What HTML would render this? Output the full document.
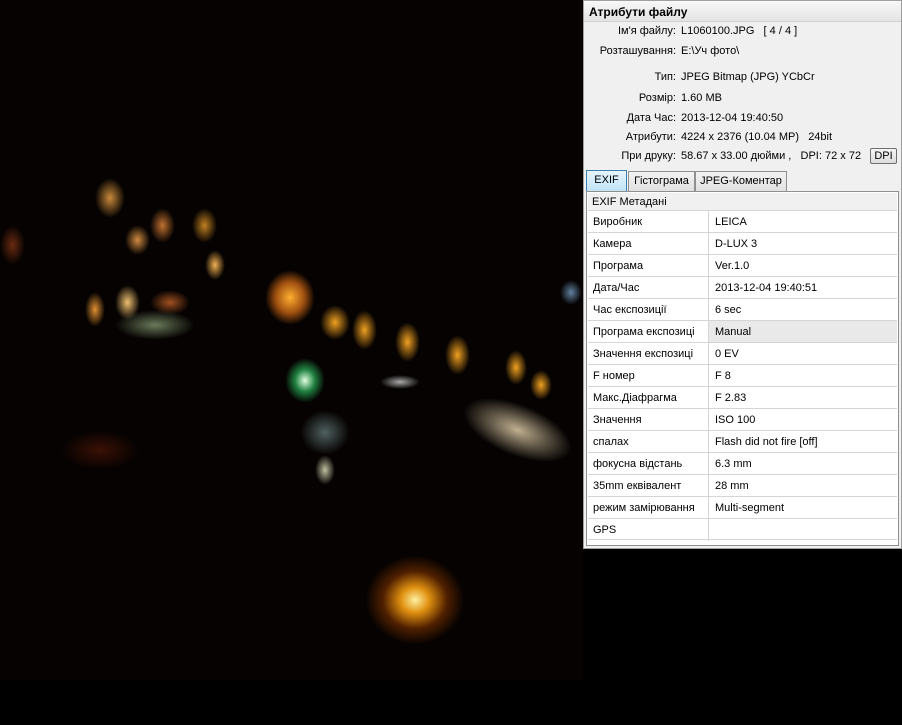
<!DOCTYPE html>
<html><head><meta charset="utf-8"><style>
*{margin:0;padding:0;box-sizing:border-box}
body{width:902px;height:725px;background:#000;position:relative;overflow:hidden;font-family:"Liberation Sans",sans-serif;font-size:11px;color:#000}
.photo{position:absolute;left:0;top:0;width:583px;height:680px;background:#050201}
.l{position:absolute;border-radius:50%}
.panel{position:absolute;left:583px;top:0;width:319px;height:549px;background:#f0f0f0;border:1px solid #a0a0a0}
.title{position:absolute;left:0;top:0;width:317px;height:21px;background:linear-gradient(#f8f8f8,#e4e4e4);font-weight:bold;font-size:12px;padding:4px 5px;border-bottom:1px solid #d0d0d0}
.kv{position:absolute;left:0;width:312px;font-size:11px}
.kv .k{position:absolute;right:220px;text-align:right;white-space:nowrap}
.kv .v{position:absolute;left:97px;white-space:nowrap}
.dpi{position:absolute;left:286px;top:147px;width:27px;height:16px;border:1px solid #707070;border-radius:2px;background:linear-gradient(#f6f6f6,#dcdcdc);font-size:11px;text-align:center;line-height:14px}
.tab{position:absolute;top:170px;height:21px;border:1px solid #8e8f8f;border-bottom:none;background:linear-gradient(#f2f2f2,#e0e0e0);font-size:11px;text-align:center;line-height:19px}
.tbl{position:absolute;left:2px;top:190px;width:313px;height:355px;border:1px solid #8e8f8f;background:#fff}
.hdr{position:absolute;left:1px;top:1px;width:309px;height:17px;background:#f0f0f0;font-size:11px;padding:3px 4px}
.row{position:absolute;left:1px;width:309px;height:22px;border-top:1px solid #d5d5d5;font-size:11px}
.row span{position:absolute;top:5px}
.row .a{left:5px}.row .b{left:127px}
.row .d{position:absolute;left:120px;top:0;width:1px;height:22px;background:#d5d5d5}
</style></head><body>
<div class="photo">
<div class="l" style="left:95px;top:178px;width:30px;height:40px;background:radial-gradient(#c98a3a,transparent 70%)"></div>
<div class="l" style="left:125px;top:225px;width:25px;height:30px;background:radial-gradient(#d08a40,transparent 70%)"></div>
<div class="l" style="left:150px;top:208px;width:25px;height:35px;background:radial-gradient(#c07030,transparent 70%)"></div>
<div class="l" style="left:192px;top:208px;width:25px;height:35px;background:radial-gradient(#c08020,transparent 70%)"></div>
<div class="l" style="left:205px;top:250px;width:20px;height:30px;background:radial-gradient(#f0b050,transparent 70%)"></div>
<div class="l" style="left:0px;top:225px;width:25px;height:40px;background:radial-gradient(#6a2a10,transparent 70%)"></div>
<div class="l" style="left:85px;top:292px;width:20px;height:35px;background:radial-gradient(#e09030,transparent 70%)"></div>
<div class="l" style="left:115px;top:285px;width:25px;height:35px;background:radial-gradient(#f0c070,transparent 70%)"></div>
<div class="l" style="left:150px;top:290px;width:40px;height:25px;background:radial-gradient(#a05020,transparent 70%)"></div>
<div class="l" style="left:115px;top:310px;width:80px;height:30px;background:radial-gradient(#6a7a5a,transparent 70%)"></div>
<div class="l" style="left:265px;top:270px;width:50px;height:55px;background:radial-gradient(#ffb030,#a05010 40%,transparent 70%)"></div>
<div class="l" style="left:320px;top:305px;width:30px;height:35px;background:radial-gradient(#f0a020,transparent 70%)"></div>
<div class="l" style="left:352px;top:310px;width:25px;height:40px;background:radial-gradient(#f0a020,transparent 70%)"></div>
<div class="l" style="left:395px;top:322px;width:25px;height:40px;background:radial-gradient(#f0a020,transparent 70%)"></div>
<div class="l" style="left:445px;top:335px;width:25px;height:40px;background:radial-gradient(#f0a020,transparent 70%)"></div>
<div class="l" style="left:505px;top:350px;width:22px;height:35px;background:radial-gradient(#f0a020,transparent 70%)"></div>
<div class="l" style="left:530px;top:370px;width:22px;height:30px;background:radial-gradient(#f0a020,transparent 70%)"></div>
<div class="l" style="left:285px;top:358px;width:40px;height:45px;background:radial-gradient(#e0ffe0,#208040 35%,transparent 70%)"></div>
<div class="l" style="left:380px;top:375px;width:40px;height:14px;background:radial-gradient(#aaa,transparent 70%)"></div>
<div class="l" style="left:450px;top:400px;width:135px;height:60px;background:radial-gradient(#c0b090,transparent 60%);transform:rotate(22deg)"></div>
<div class="l" style="left:300px;top:410px;width:50px;height:45px;background:radial-gradient(#506060,transparent 70%)"></div>
<div class="l" style="left:60px;top:430px;width:80px;height:40px;background:radial-gradient(#3a1005,transparent 70%)"></div>
<div class="l" style="left:315px;top:455px;width:20px;height:30px;background:radial-gradient(#c0c0a0,transparent 70%)"></div>
<div class="l" style="left:365px;top:555px;width:100px;height:90px;background:radial-gradient(#fff0a0,#e09010 20%,#502000 45%,transparent 70%)"></div>
<div class="l" style="left:560px;top:280px;width:22px;height:25px;background:radial-gradient(#6080a0,transparent 70%)"></div>
</div>
<div class="panel">
<div class="title">Атрибути файлу</div>
<div class="kv" style="top:24px"><span class="k">Ім'я файлу:</span><span class="v">L1060100.JPG &nbsp; [ 4 / 4 ]</span></div>
<div class="kv" style="top:44px"><span class="k">Розташування:</span><span class="v">E:\Уч фото\</span></div>
<div class="kv" style="top:70px"><span class="k">Тип:</span><span class="v">JPEG Bitmap (JPG) YCbCr</span></div>
<div class="kv" style="top:91px"><span class="k">Розмір:</span><span class="v">1.60 MB</span></div>
<div class="kv" style="top:111px"><span class="k">Дата Час:</span><span class="v">2013-12-04 19:40:50</span></div>
<div class="kv" style="top:130px"><span class="k">Атрибути:</span><span class="v">4224 x 2376 (10.04 MP) &nbsp; 24bit</span></div>
<div class="kv" style="top:149px"><span class="k">При друку:</span><span class="v">58.67 x 33.00 дюйми , &nbsp; DPI: 72 x 72</span></div>
<div class="dpi">DPI</div>
<div class="tab" style="left:2px;width:41px;background:linear-gradient(#e6f4fc,#bfe3f7);border-color:#3c7fb1;height:22px;top:169px">EXIF</div>
<div class="tab" style="left:44px;width:67px">Гістограма</div>
<div class="tab" style="left:111px;width:92px">JPEG-Коментар</div>
<div class="tbl">
<div class="hdr">EXIF Метадані</div>
<div class="row" style="top:18px"><div class="d"></div><span class="a">Виробник</span><span class="b">LEICA</span></div>
<div class="row" style="top:40px"><div class="d"></div><span class="a">Камера</span><span class="b">D-LUX 3</span></div>
<div class="row" style="top:62px"><div class="d"></div><span class="a">Програма</span><span class="b">Ver.1.0</span></div>
<div class="row" style="top:84px"><div class="d"></div><span class="a">Дата/Час</span><span class="b">2013-12-04 19:40:51</span></div>
<div class="row" style="top:106px"><div class="d"></div><span class="a">Час експозиції</span><span class="b">6 sec</span></div>
<div class="row" style="top:128px"><div style="position:absolute;left:121px;top:0;width:188px;height:21px;background:#e9e9e9"></div><div class="d"></div><span class="a">Програма експозиці</span><span class="b">Manual</span></div>
<div class="row" style="top:150px"><div class="d"></div><span class="a">Значення експозиці</span><span class="b">0 EV</span></div>
<div class="row" style="top:172px"><div class="d"></div><span class="a">F номер</span><span class="b">F 8</span></div>
<div class="row" style="top:194px"><div class="d"></div><span class="a">Макс.Діафрагма</span><span class="b">F 2.83</span></div>
<div class="row" style="top:216px"><div class="d"></div><span class="a">Значення</span><span class="b">ISO 100</span></div>
<div class="row" style="top:238px"><div class="d"></div><span class="a">спалах</span><span class="b">Flash did not fire [off]</span></div>
<div class="row" style="top:260px"><div class="d"></div><span class="a">фокусна відстань</span><span class="b">6.3 mm</span></div>
<div class="row" style="top:282px"><div class="d"></div><span class="a">35mm еквівалент</span><span class="b">28 mm</span></div>
<div class="row" style="top:304px"><div class="d"></div><span class="a">режим замірювання</span><span class="b">Multi-segment</span></div>
<div class="row" style="top:326px;border-bottom:1px solid #d5d5d5"><div class="d"></div><span class="a">GPS</span></div>
</div>
</div>
</body></html>
